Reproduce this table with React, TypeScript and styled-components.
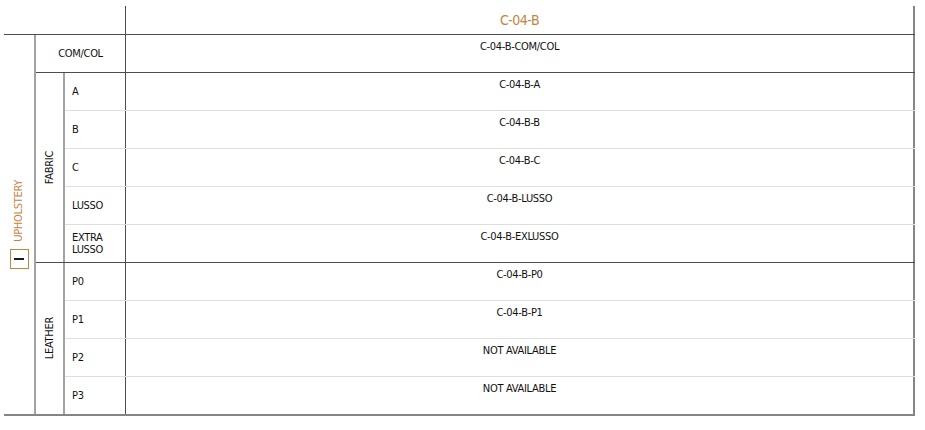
import styled, { createGlobalStyle } from "styled-components";

const GlobalStyle = createGlobalStyle`
  body {
    margin: 0;
    background: #ffffff;
  }
`;

const ORANGE = "#c4843f";
const DARK_LINE = "#4d4d4d";
const GRAY_LINE = "#a3a3a3";
const EDGE_LINE = "#858585";
const LIGHT_LINE = "#dedede";

type Item = { label: string; value: string };

const fabric: Item[] = [
  { label: "A", value: "C-04-B-A" },
  { label: "B", value: "C-04-B-B" },
  { label: "C", value: "C-04-B-C" },
  { label: "LUSSO", value: "C-04-B-LUSSO" },
  { label: "EXTRA LUSSO", value: "C-04-B-EXLUSSO" },
];

const leather: Item[] = [
  { label: "P0", value: "C-04-B-P0" },
  { label: "P1", value: "C-04-B-P1" },
  { label: "P2", value: "NOT AVAILABLE" },
  { label: "P3", value: "NOT AVAILABLE" },
];

const App = () => {
  return (
    <>
      <GlobalStyle />
      <Page>
        <Header>
          <HeaderSpacer />
          <HeaderTitle>C-04-B</HeaderTitle>
        </Header>

        <Body>
          <SideCol>
            <VerticalText $color={ORANGE}>UPHOLSTERY</VerticalText>
            <ToggleBox>
              <Minus />
            </ToggleBox>
          </SideCol>

          <Main>
            <TopRow>
              <WideLabel>COM/COL</WideLabel>
              <Value>C-04-B-COM/COL</Value>
            </TopRow>

            <Group $divider>
              <GroupLabel>
                <VerticalText>FABRIC</VerticalText>
              </GroupLabel>
              <Rows>
                {fabric.map((item) => (
                  <Row key={item.label}>
                    <RowLabel>
                      {item.label === "EXTRA LUSSO" ? (
                        <>
                          EXTRA
                          <br />
                          LUSSO
                        </>
                      ) : (
                        item.label
                      )}
                    </RowLabel>
                    <Value>{item.value}</Value>
                  </Row>
                ))}
              </Rows>
            </Group>

            <Group>
              <GroupLabel>
                <VerticalText>LEATHER</VerticalText>
              </GroupLabel>
              <Rows>
                {leather.map((item) => (
                  <Row key={item.label}>
                    <RowLabel>{item.label}</RowLabel>
                    <Value>{item.value}</Value>
                  </Row>
                ))}
              </Rows>
            </Group>
          </Main>
        </Body>
      </Page>
    </>
  );
};

export default App;

const Page = styled.div`
  padding: 6px 0 0 4px;
  width: 911px;
  font-family: "Liberation Sans Narrow", "DejaVu Sans Condensed", "Liberation Sans", sans-serif;
  font-size: 11px;
  letter-spacing: -0.3px;
  color: #111111;
`;

const Header = styled.div`
  display: flex;
  height: 28px;
`;

const HeaderSpacer = styled.div`
  width: 121px;
`;

const HeaderTitle = styled.div`
  flex: 1;
  display: flex;
  align-items: center;
  justify-content: center;
  border-left: 1px solid ${DARK_LINE};
  border-right: 2px solid ${EDGE_LINE};
  color: ${ORANGE};
  font-size: 14px;
  letter-spacing: -0.5px;
`;

const Body = styled.div`
  display: flex;
  border-top: 1px solid ${DARK_LINE};
  border-bottom: 2px solid ${EDGE_LINE};
`;

const SideCol = styled.div`
  width: 30px;
  border-right: 2px solid ${GRAY_LINE};
  display: flex;
  flex-direction: column;
  align-items: center;
  justify-content: center;
  gap: 7px;
`;

const VerticalText = styled.span<{ $color?: string }>`
  writing-mode: vertical-rl;
  transform: rotate(180deg);
  color: ${(p) => p.$color || "#111111"};
  line-height: 12px;
  white-space: nowrap;
`;

const ToggleBox = styled.div`
  width: 17px;
  height: 18px;
  border: 1px solid ${ORANGE};
  display: flex;
  align-items: center;
  justify-content: center;
`;

const Minus = styled.div`
  width: 10px;
  height: 2px;
  background: #1a1a1a;
`;

const Main = styled.div`
  flex: 1;
  display: flex;
  flex-direction: column;
`;

const TopRow = styled.div`
  display: flex;
  height: 38px;
  box-sizing: border-box;
  border-bottom: 1px solid ${DARK_LINE};
`;

const WideLabel = styled.div`
  width: 89px;
  display: flex;
  align-items: center;
  justify-content: center;
`;

const Group = styled.div<{ $divider?: boolean }>`
  display: flex;
  border-bottom: ${(p) => (p.$divider ? `1px solid ${DARK_LINE}` : "none")};
`;

const GroupLabel = styled.div`
  width: 27px;
  border-right: 2px solid ${GRAY_LINE};
  display: flex;
  align-items: center;
  justify-content: center;
`;

const Rows = styled.div`
  flex: 1;
  display: flex;
  flex-direction: column;
`;

const Row = styled.div`
  display: flex;
  height: 38px;
  box-sizing: border-box;
  border-bottom: 1px solid ${LIGHT_LINE};

  &:last-child {
    height: 37px;
    border-bottom: none;
  }
`;

const RowLabel = styled.div`
  width: 60px;
  box-sizing: border-box;
  padding-left: 7px;
  display: flex;
  align-items: center;
  line-height: 12px;
`;

const Value = styled.div`
  flex: 1;
  border-left: 1px solid ${DARK_LINE};
  border-right: 2px solid ${EDGE_LINE};
  text-align: center;
  padding-top: 5px;
  line-height: 13px;
`;
